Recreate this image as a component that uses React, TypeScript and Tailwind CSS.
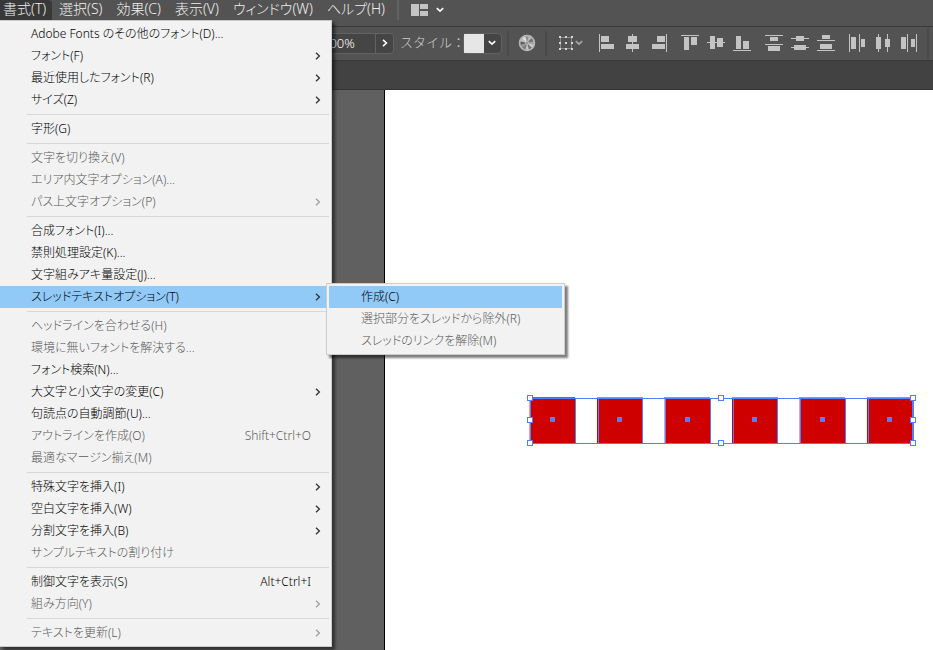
import type { ReactNode } from "react";

type MenuEntry = {
  label: string;
  shortcut?: string;
  disabled?: boolean;
  children?: MenuEntry[];
  hasSubmenu?: boolean;
};

type Rect = [x: number, y: number, width: number, height: number];

const threadMenu: MenuEntry[] = [
  { label: "作成(C)" },
  { label: "選択部分をスレッドから除外(R)", disabled: true },
  { label: "スレッドのリンクを解除(M)", disabled: true },
];

const typeMenu: MenuEntry[][] = [
  [
    { label: "Adobe Fonts のその他のフォント(D)..." },
    { label: "フォント(F)", hasSubmenu: true },
    { label: "最近使用したフォント(R)", hasSubmenu: true },
    { label: "サイズ(Z)", hasSubmenu: true },
  ],
  [{ label: "字形(G)" }],
  [
    { label: "文字を切り換え(V)", disabled: true },
    { label: "エリア内文字オプション(A)...", disabled: true },
    { label: "パス上文字オプション(P)", disabled: true, hasSubmenu: true },
  ],
  [
    { label: "合成フォント(I)..." },
    { label: "禁則処理設定(K)..." },
    { label: "文字組みアキ量設定(J)..." },
    { label: "スレッドテキストオプション(T)", hasSubmenu: true, children: threadMenu },
  ],
  [
    { label: "ヘッドラインを合わせる(H)", disabled: true },
    { label: "環境に無いフォントを解決する...", disabled: true },
    { label: "フォント検索(N)..." },
    { label: "大文字と小文字の変更(C)", hasSubmenu: true },
    { label: "句読点の自動調節(U)..." },
    { label: "アウトラインを作成(O)", shortcut: "Shift+Ctrl+O", disabled: true },
    { label: "最適なマージン揃え(M)", disabled: true },
  ],
  [
    { label: "特殊文字を挿入(I)", hasSubmenu: true },
    { label: "空白文字を挿入(W)", hasSubmenu: true },
    { label: "分割文字を挿入(B)", hasSubmenu: true },
    { label: "サンプルテキストの割り付け", disabled: true },
  ],
  [
    { label: "制御文字を表示(S)", shortcut: "Alt+Ctrl+I" },
    { label: "組み方向(Y)", disabled: true, hasSubmenu: true },
  ],
  [{ label: "テキストを更新(L)", disabled: true, hasSubmenu: true }],
];

const menuBar = ["選択(S)", "効果(C)", "表示(V)", "ウィンドウ(W)", "ヘルプ(H)"];

const horizontalAlign: { name: string; rects: Rect[] }[] = [
  { name: "水平方向左に整列", rects: [[0, 0, 1, 18], [2, 2, 8, 6], [2, 10, 13, 5]] },
  { name: "水平方向中央に整列", rects: [[8, 0, 1, 18], [4, 2, 9, 6], [2, 10, 13, 5]] },
  { name: "水平方向右に整列", rects: [[17, 0, 1, 18], [8, 2, 8, 6], [3, 10, 13, 5]] },
];

const verticalAlign: { name: string; rects: Rect[] }[] = [
  { name: "垂直方向上に整列", rects: [[0, 1, 18, 1], [3, 3, 5, 13], [10, 3, 6, 8]] },
  { name: "垂直方向中央に整列", rects: [[0, 8, 18, 1], [3, 2, 5, 13], [10, 4, 6, 9]] },
  { name: "垂直方向下に整列", rects: [[0, 16, 18, 1], [3, 2, 5, 13], [10, 7, 6, 8]] },
];

const verticalDistribute: { name: string; rects: Rect[] }[] = [
  { name: "垂直方向上に分布", rects: [[0, 1, 18, 1], [5, 3, 8, 4], [0, 10, 18, 1], [3, 12, 12, 5]] },
  { name: "垂直方向中央に分布", rects: [[0, 4, 18, 1], [5, 2, 8, 5], [0, 13, 18, 1], [3, 11, 12, 5]] },
  { name: "垂直方向下に分布", rects: [[5, 1, 8, 4], [0, 6, 18, 1], [3, 10, 12, 5], [0, 16, 18, 1]] },
];

const horizontalDistribute: { name: string; rects: Rect[] }[] = [
  { name: "水平方向左に分布", rects: [[0, 0, 1, 18], [2, 3, 5, 12], [10, 0, 1, 18], [12, 5, 4, 8]] },
  { name: "水平方向中央に分布", rects: [[3, 0, 1, 18], [1, 3, 5, 12], [12, 0, 1, 18], [10, 5, 5, 8]] },
  { name: "水平方向右に分布", rects: [[0, 3, 5, 12], [6, 0, 1, 18], [10, 5, 4, 8], [15, 0, 1, 18]] },
];

function ChevronRight() {
  return (
    <svg width="6" height="8" viewBox="0 0 6 8" fill="none" stroke="currentColor" strokeWidth="1.3">
      <path d="M1 0.8 4.4 4 1 7.2" />
    </svg>
  );
}

function ChevronDown({ className }: { className?: string }) {
  return (
    <svg width="8" height="6" viewBox="0 0 8 6" fill="none" stroke="currentColor" strokeWidth="1.6" className={className}>
      <path d="M0.8 1.2 4 4.2 7.2 1.2" />
    </svg>
  );
}

function Divider() {
  return <div className="h-[25px] w-0.5 shrink-0 bg-[#4a4a4a]" />;
}

function MenuRow({ entry }: { entry: MenuEntry }) {
  const open = Boolean(entry.children);

  return (
    <li role="none" className="relative">
      <button
        type="button"
        role="menuitem"
        disabled={entry.disabled}
        aria-haspopup={entry.hasSubmenu ? "menu" : undefined}
        className={`flex h-[22px] w-full items-center pl-[31px] text-left hover:bg-[#91c9f7] disabled:text-[#5a5a5a] disabled:hover:bg-transparent ${
          open ? "bg-[#91c9f7]" : ""
        }`}
      >
        <span className="flex-1 whitespace-nowrap">{entry.label}</span>
        {entry.shortcut ? <span className="mr-[18px]">{entry.shortcut}</span> : null}
        {entry.hasSubmenu ? (
          <span className={`mr-2 ${entry.disabled ? "text-[#a0a0a0]" : "text-[#333]"}`}>
            <ChevronRight />
          </span>
        ) : null}
      </button>

      {entry.children ? (
        <ul
          role="menu"
          className="absolute -top-[3px] left-full -ml-[3px] w-[239px] border border-[#ccc] bg-[#f2f2f2] p-0.5 shadow-[3px_3px_2px_rgba(0,0,0,0.5)]"
        >
          {entry.children.map((child, index) => (
            <li key={child.label} role="none">
              <button
                type="button"
                role="menuitem"
                disabled={child.disabled}
                className={`flex h-[22px] w-full items-center pl-8 whitespace-nowrap disabled:text-[#5a5a5a] ${
                  index === 0 ? "bg-[#91c9f7]" : ""
                }`}
              >
                {child.label}
              </button>
            </li>
          ))}
        </ul>
      ) : null}
    </li>
  );
}

function TypeMenu() {
  return (
    <div
      role="menu"
      className="absolute top-5 left-0 z-20 w-[332px] border-y border-r border-[#ccc] bg-[#f2f2f2] py-0.5 pr-0.5 text-xs text-black shadow-[3px_3px_3px_rgba(0,0,0,0.5)]"
    >
      {typeMenu.map((group, index) => (
        <div key={group[0].label}>
          {index > 0 ? <hr className="my-[3px] ml-[27px] border-[#d7d7d7]" /> : null}
          <ul>
            {group.map((entry) => (
              <MenuRow key={entry.label} entry={entry} />
            ))}
          </ul>
        </div>
      ))}
    </div>
  );
}

function IconButton({ name, children }: { name: string; children: ReactNode }) {
  return (
    <button type="button" aria-label={name} className="block shrink-0 text-[#c4c4c4] hover:text-white">
      {children}
    </button>
  );
}

function AlignGroup({ items, className }: { items: { name: string; rects: Rect[] }[]; className: string }) {
  return (
    <div className={`flex shrink-0 ${className}`}>
      {items.map((item) => (
        <IconButton key={item.name} name={item.name}>
          <svg width="18" height="18" viewBox="0 0 18 18" fill="currentColor" shapeRendering="crispEdges">
            {item.rects.map(([x, y, width, height]) => (
              <rect key={`${x}-${y}`} x={x} y={y} width={width} height={height} />
            ))}
          </svg>
        </IconButton>
      ))}
    </div>
  );
}

function RecolorIcon() {
  const shades = ["#8d8d8d", "#b9b9b9", "#6f6f6f", "#a4a4a4", "#d0d0d0", "#777", "#c4c4c4", "#7b7b7b", "#999", "#5e5e5e", "#bdbdbd", "#dedede"];

  return (
    <svg width="18" height="18" viewBox="-9 -9 18 18">
      <circle r="8.2" fill="#888" />
      {shades.map((shade, index) => (
        <path key={shade} d="M0 0 -2.1 -7.4 A7.7 7.7 0 0 1 2.1 -7.4Z" fill={shade} transform={`rotate(${index * 30})`} />
      ))}
      <circle r="7.4" fill="none" stroke="#b4b4b4" strokeWidth="1.6" />
      <circle r="1.8" fill="#c8c8c8" />
      <circle r="0.8" fill="#555" />
    </svg>
  );
}

function TransformIcon() {
  const points = [0, 6, 12];

  return (
    <svg width="14" height="14" viewBox="0 0 14 14" shapeRendering="crispEdges">
      <rect x="1.5" y="1.5" width="11" height="11" fill="none" stroke="#8a8a8a" />
      {points.flatMap((x) =>
        points.map((y) => <rect key={`${x}-${y}`} x={x} y={y} width="2" height="2" fill="#d6d6d6" />),
      )}
    </svg>
  );
}

function ControlBar() {
  return (
    <div className="flex h-[35px] items-center border-y border-[#383838] bg-[#535353] pb-px pl-[317px]">
      <div className="flex h-[21px] shrink-0 rounded-sm border border-[#626262] bg-[#454545] text-white">
        <input
          aria-label="不透明度"
          defaultValue="100%"
          className="w-[58px] border-r border-[#626262] bg-transparent pl-1 text-[13px] leading-none outline-none"
        />
        <button type="button" aria-label="不透明度を変更" className="flex w-[17px] items-center justify-center">
          <svg width="6" height="8" viewBox="0 0 6 8" fill="none" stroke="currentColor" strokeWidth="1.6">
            <path d="M1 0.8 4.4 4 1 7.2" />
          </svg>
        </button>
      </div>

      <span
        id="style-label"
        className="ml-1.5 w-[63px] shrink-0 whitespace-nowrap text-[13px] text-[#d0d0d0] [font-feature-settings:normal]"
      >
        スタイル：
      </span>
      <button
        type="button"
        aria-labelledby="style-label"
        className="flex h-[21px] w-[39px] shrink-0 items-center rounded-sm border border-[#626262] bg-[#454545] text-white"
      >
        <span className="h-[19px] w-5 bg-[#e6e6e6]" />
        <ChevronDown className="ml-1" />
      </button>

      <div className="ml-[5px] flex shrink-0 items-center gap-[9px]">
        <Divider />
        <IconButton name="オブジェクトを再配色">
          <RecolorIcon />
        </IconButton>
        <Divider />
      </div>

      <button type="button" aria-label="変形" className="ml-3 mr-4 flex shrink-0 items-center gap-0.5 text-[#a8a8a8]">
        <TransformIcon />
        <ChevronDown />
      </button>

      <div className="flex shrink-0 items-center gap-3.5">
        <AlignGroup items={horizontalAlign} className="gap-[7px]" />
        <AlignGroup items={verticalAlign} className="gap-2" />
        <AlignGroup items={verticalDistribute} className="gap-2" />
        <AlignGroup items={horizontalDistribute} className="gap-2" />
      </div>
      <div className="ml-2 h-[31px] w-0.5 shrink-0 bg-[#4a4a4a]" />
    </div>
  );
}

function SelectedSquares() {
  // the pitch is 67.5px, so every second square is drawn one pixel narrower
  const squares = [
    { x: 3, size: 46 },
    { x: 71, size: 45 },
    { x: 138, size: 46 },
    { x: 206, size: 45 },
    { x: 273, size: 46 },
    { x: 341, size: 45 },
  ];
  const handles = [
    [0, 0],
    [191, 0],
    [383, 0],
    [0, 22],
    [383, 22],
    [0, 45],
    [191, 45],
    [383, 45],
  ];

  return (
    <svg
      width="389"
      height="51"
      viewBox="0 0 389 51"
      shapeRendering="crispEdges"
      className="absolute top-[305px] left-[142px]"
      role="img"
      aria-label="選択中の長方形"
    >
      {squares.map(({ x, size }, index) => (
        <g key={x}>
          <rect x={x - 1} y="2" width="46" height="1" fill={index === 0 ? "#df3c3c" : "#e07b80"} />
          <rect x={x - 1} y="3" width="46" height="46" fill={size === 46 ? "#e5a5b0" : "#cf0000"} />
          <rect x={x} y="3" width={size} height="46" fill="#cf0000" />
          <path d={`M${x + 0.5} 3V49M${x + size - 0.5} 3V49`} stroke="#4f80ff" />
          <rect x={x + size - 26} y="22" width="5" height="5" fill="#4f80ff" />
        </g>
      ))}
      <rect x="3.5" y="3.5" width="383" height="45" fill="none" stroke="#4f80ff" />
      {handles.map(([x, y]) => (
        <rect key={`${x}-${y}`} x={x + 0.5} y={y + 0.5} width="5" height="5" fill="#fff" stroke="#4f80ff" />
      ))}
    </svg>
  );
}

export default function App() {
  return (
    <div className="flex h-screen flex-col overflow-hidden bg-[#606060] font-['Noto_Sans','Noto_Sans_CJK_JP',sans-serif] font-light [font-feature-settings:'palt']">
      <header className="relative shrink-0">
        <nav className="flex h-[26px] items-start bg-[#535353] text-sm leading-[18px] text-[#f0f0f0]">
          <button
            type="button"
            aria-haspopup="menu"
            aria-expanded="true"
            className="h-5 w-[52px] shrink-0 rounded-tr-sm bg-[#383838] pb-0.5 pl-[3px] text-left whitespace-nowrap"
          >
            書式(T)
          </button>
          <div className="ml-[7px] flex shrink-0 gap-3.5">
            {menuBar.map((label) => (
              <button key={label} type="button" className="whitespace-nowrap">
                {label}
              </button>
            ))}
          </div>
          <div className="ml-3 h-5 w-0.5 bg-[#626262]" />
          <button type="button" aria-label="ワークスペース" className="ml-3 flex h-5 items-center gap-2 text-white">
            <svg width="17" height="12" viewBox="0 0 17 12" fill="#c4c4c4" shapeRendering="crispEdges">
              <path d="M0 0H8V12H0zM9 0H17V5H9zM9 7H17V12H9z" />
            </svg>
            <ChevronDown />
          </button>
        </nav>
        <TypeMenu />
        <ControlBar />
        <div className="h-[29px] border-b border-[#353535] bg-[#424242]" />
      </header>

      <main className="flex min-h-0 flex-1 pl-96">
        <div className="relative flex-1 border-l border-black bg-white">
          <SelectedSquares />
        </div>
      </main>
    </div>
  );
}
